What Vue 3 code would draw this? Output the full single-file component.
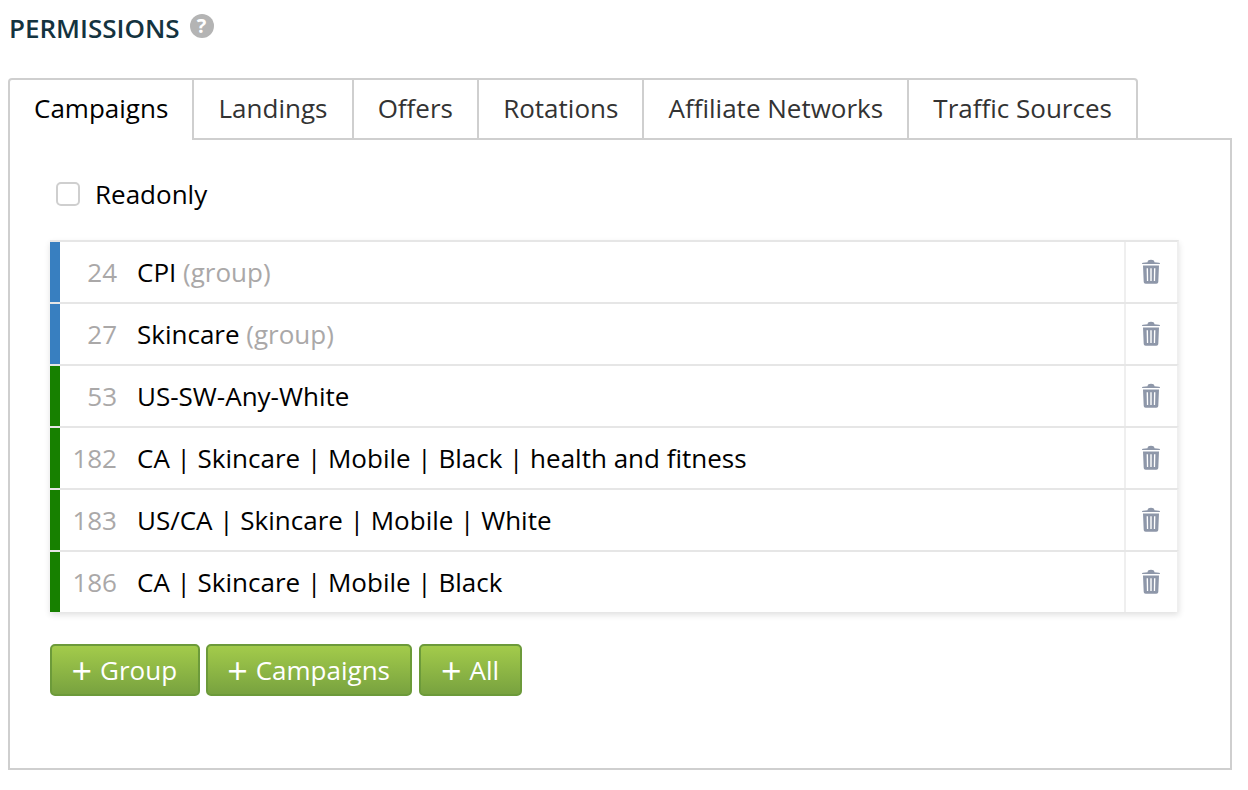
<script setup>
const tabs = ['Campaigns', 'Landings', 'Offers', 'Rotations', 'Affiliate Networks', 'Traffic Sources']

const rows = [
  { id: 24, name: 'CPI', group: true },
  { id: 27, name: 'Skincare', group: true },
  { id: 53, name: 'US-SW-Any-White' },
  { id: 182, name: 'CA | Skincare | Mobile | Black | health and fitness' },
  { id: 183, name: 'US/CA | Skincare | Mobile | White' },
  { id: 186, name: 'CA | Skincare | Mobile | Black' },
]

const buttons = ['Group', 'Campaigns', 'All']
</script>

<template>
  <div class="page">
    <div class="heading">
      <h2>PERMISSIONS</h2>
      <span class="help">?</span>
    </div>

    <div class="tabs">
      <div
        v-for="(tab, i) in tabs"
        :key="tab"
        class="tab"
        :class="{ active: i === 0 }"
      >
        {{ tab }}
      </div>
    </div>

    <div class="panel">
      <label class="readonly">
        <span class="check"></span>
        Readonly
      </label>

      <div class="list">
        <div v-for="row in rows" :key="row.id" class="row">
          <div class="row-inner" :class="{ group: row.group }">
            <span class="id">{{ row.id }}</span>
            <span class="name">{{ row.name }}<span v-if="row.group" class="muted"> (group)</span></span>
            <span class="action">
              <svg width="18" height="25" viewBox="0 0 18 25">
                <path fill="#8e97a9" d="M5.500 3.200C5.800 1.500 6.800.8 9 .8s3.200.7 3.500 2.400l4.500.5c.6.100 1 .5 1 1V5H0v-.3c0-.5.4-.9 1-1z" />
                <path fill="#8e97a9" fill-rule="evenodd" d="M1 6.400h16l-.7 16.400c-.1 1.200-.8 1.900-2 1.900H3.700c-1.200 0-1.900-.7-2-1.900zM4.600 9.200l.3 12.800h1.300L6 9.200zm3.700 0V22h1.400V9.200zm3.700 0L11.800 22h1.300l.3-12.800z" />
              </svg>
            </span>
          </div>
        </div>
      </div>

      <div class="buttons">
        <button v-for="b in buttons" :key="b" class="btn"><span class="plus">+</span>{{ b }}</button>
      </div>
    </div>
  </div>
</template>

<style>
html, body {
  background: #fff;
}
</style>

<style scoped>
.page {
  width: 1224px;
  padding-left: 8px;
  font-family: "Open Sans", sans-serif;
  font-size: 26px;
  color: #000;
}

.heading {
  height: 78px;
  display: flex;
  align-items: flex-start;
  gap: 10px;
}

h2 {
  margin: 10px 0 0 1px;
  font-size: 26px;
  line-height: 36px;
  font-weight: 600;
  color: #14333f;
}

.help {
  width: 24px;
  height: 24px;
  margin-top: 14px;
  border-radius: 50%;
  background: #b4b4b4;
  color: #fff;
  font-size: 20px;
  font-weight: 700;
  line-height: 24px;
  text-align: center;
}

.tabs {
  display: flex;
  position: relative;
  z-index: 1;
  height: 62px;
}

.tab {
  box-sizing: border-box;
  height: 62px;
  padding: 0 24.1px;
  line-height: 56px;
  color: #333;
  background: #fff;
  border: 2px solid #cfcfcf;
  border-left: 0;
  white-space: nowrap;
}

.tab:first-child {
  padding: 0 24.2px 0 24px;
  border-left: 2px solid #cfcfcf;
  border-top-left-radius: 4px;
}

.tab:last-child {
  border-top-right-radius: 4px;
}

.tab.active {
  color: #000;
  border-bottom: 0;
}

.panel {
  box-sizing: border-box;
  height: 632px;
  margin-top: -2px;
  padding: 34px 51px 0 40px;
  border: 2px solid #cfcfcf;
}

.readonly {
  display: flex;
  align-items: center;
  gap: 15px;
  height: 40px;
  margin-left: 6px;
}

.check {
  box-sizing: border-box;
  width: 24px;
  height: 24px;
  border: 2px solid #cfcfcf;
  border-radius: 5px;
}

.list {
  margin-top: 26px;
  box-shadow: 0 3px 6px rgba(0, 0, 0, 0.12);
}

.row {
  box-sizing: border-box;
  height: 62px;
  border-top: 2px solid #e6e6e6;
  border-right: 2px solid #efefef;
}

.row-inner {
  display: flex;
  align-items: center;
  height: 100%;
  border-left: 10px solid #178000;
}

.row-inner.group {
  border-left-color: #387fc0;
}

.id {
  width: 57px;
  text-align: right;
  color: #aaa8a8;
}

.name {
  flex: 1;
  margin-left: 20px;
}

.muted {
  color: #aaa8a8;
}

.action {
  display: flex;
  align-items: center;
  justify-content: center;
  width: 51px;
  height: 100%;
  border-left: 2px solid #efefef;
}

.action svg {
  margin: 0 1px 2px 0;
}

.buttons {
  display: flex;
  gap: 6px;
  margin-top: 32px;
}

.btn {
  box-sizing: border-box;
  height: 52px;
  padding: 0 20.5px 0 19.5px;
  border: 2px solid #6c9a3a;
  border-radius: 5px;
  background: linear-gradient(#a3cb4b, #78a23f);
  color: #fff;
  font-family: inherit;
  font-size: 26px;
  line-height: 46px;
  white-space: nowrap;
}

.btn:last-child {
  margin-left: 1px;
}

.plus {
  margin-right: 8px;
  font-size: 36px;
  line-height: 32px;
  vertical-align: -4px;
}
</style>
